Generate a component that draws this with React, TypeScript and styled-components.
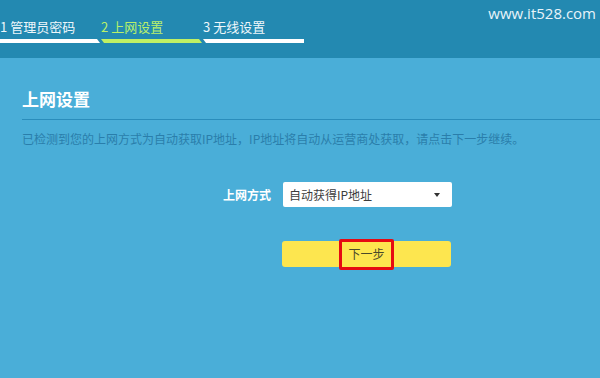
import React from "react";
import styled, { createGlobalStyle } from "styled-components";

const Global = createGlobalStyle`
  html, body { margin: 0; padding: 0; }
  body {
    width: 600px; height: 378px; overflow: hidden;
    font-family: "Noto Sans CJK SC", "Noto Sans", sans-serif;
    background: #4aaed8;
  }
`;

const Page = styled.div`
  width: 600px;
  height: 378px;
  display: flex;
  flex-direction: column;
  background: #4aaed8;
`;

const Header = styled.div`
  height: 58px;
  background: #2389b1;
  display: flex;
  justify-content: space-between;
  align-items: flex-start;
  position: relative;
`;

const Steps = styled.div`
  display: flex;
  padding-top: 18px;
`;

const Step = styled.div<{ $first?: boolean; $last?: boolean; $active?: boolean }>`
  width: ${(p) => (p.$first ? 100 : 101)}px;
  margin-left: ${(p) => (p.$first ? 0 : 1)}px;
  display: flex;
  flex-direction: column;
  font-size: 13px;
  line-height: 18px;
  color: ${(p) => (p.$active ? "#b9f06a" : "#eef7fb")};
  white-space: nowrap;
`;

const Label = styled.div`
  padding-left: 0;
`;

const Bar = styled.div<{ $first?: boolean; $last?: boolean; $active?: boolean }>`
  margin-top: 3px;
  height: 4px;
  background: ${(p) => (p.$active ? "#c0f064" : "#ffffff")};
  clip-path: ${(p) =>
    p.$first
      ? "polygon(0 0, 97% 0, 100% 100%, 0 100%)"
      : p.$last
      ? "polygon(0 0, 100% 0, 100% 100%, 3% 100%)"
      : "polygon(0 0, 97% 0, 100% 100%, 3% 100%)"};
`;

const Watermark = styled.div`
  padding-top: 3px;
  padding-right: 4px;
  font-family: "Open Sans", "DejaVu Sans", sans-serif;
  font-size: 15px;
  line-height: 20px;
  color: #e8f4fa;
`;

const Content = styled.div`
  padding: 29px 0 0 22px;
  display: flex;
  flex-direction: column;
`;

const Title = styled.h1`
  margin: 0;
  font-size: 17px;
  line-height: 24px;
  font-weight: 700;
  color: #ffffff;
`;

const Divider = styled.div`
  margin-top: 8px;
  height: 1px;
  background: #2a8dbb;
`;

const Desc = styled.p`
  margin: 10px 0 0 0;
  font-size: 12px;
  line-height: 18px;
  color: #2a7eab;
  white-space: nowrap;
`;

const FormRow = styled.div`
  margin-top: 34px;
  margin-left: 201px;
  display: flex;
  align-items: center;
`;

const FieldLabel = styled.div`
  width: 60px;
  font-size: 12px;
  font-weight: 700;
  color: #ffffff;
  line-height: 18px;
`;

const Select = styled.div`
  width: 169px;
  height: 25px;
  box-sizing: border-box;
  background: #ffffff;
  border-radius: 2px;
  display: flex;
  align-items: center;
  justify-content: space-between;
  padding: 0 12px 0 6px;
  font-size: 12px;
  color: #3c3c3c;
`;

const Caret = styled.span`
  width: 0;
  height: 0;
  border-left: 3px solid transparent;
  border-right: 3px solid transparent;
  border-top: 4px solid #333;
`;

const ButtonRow = styled.div`
  margin-top: 34px;
  margin-left: 260px;
  display: flex;
`;

const Button = styled.div`
  width: 169px;
  height: 26px;
  background: #fde64f;
  border-radius: 3px;
  display: flex;
  align-items: center;
  justify-content: center;
  position: relative;
`;

const Highlight = styled.span`
  box-sizing: border-box;
  width: 55px;
  height: 31px;
  border: 3px solid #e60b12;
  border-radius: 2px;
  display: flex;
  align-items: center;
  justify-content: center;
  font-size: 12px;
  color: #4a4a2a;
  line-height: 16px;
`;

export default function App() {
  return (
    <>
      <Global />
      <Page>
        <Header>
          <Steps>
            <Step $first>
              <Label>1 管理员密码</Label>
              <Bar $first />
            </Step>
            <Step $active>
              <Label>2 上网设置</Label>
              <Bar $active />
            </Step>
            <Step $last>
              <Label>3 无线设置</Label>
              <Bar $last />
            </Step>
          </Steps>
          <Watermark>www.it528.com</Watermark>
        </Header>
        <Content>
          <Title>上网设置</Title>
          <Divider />
          <Desc>已检测到您的上网方式为自动获取IP地址，IP地址将自动从运营商处获取，请点击下一步继续。</Desc>
          <FormRow>
            <FieldLabel>上网方式</FieldLabel>
            <Select>
              <span>自动获得IP地址</span>
              <Caret />
            </Select>
          </FormRow>
          <ButtonRow>
            <Button>
              <Highlight>下一步</Highlight>
            </Button>
          </ButtonRow>
        </Content>
      </Page>
    </>
  );
}
